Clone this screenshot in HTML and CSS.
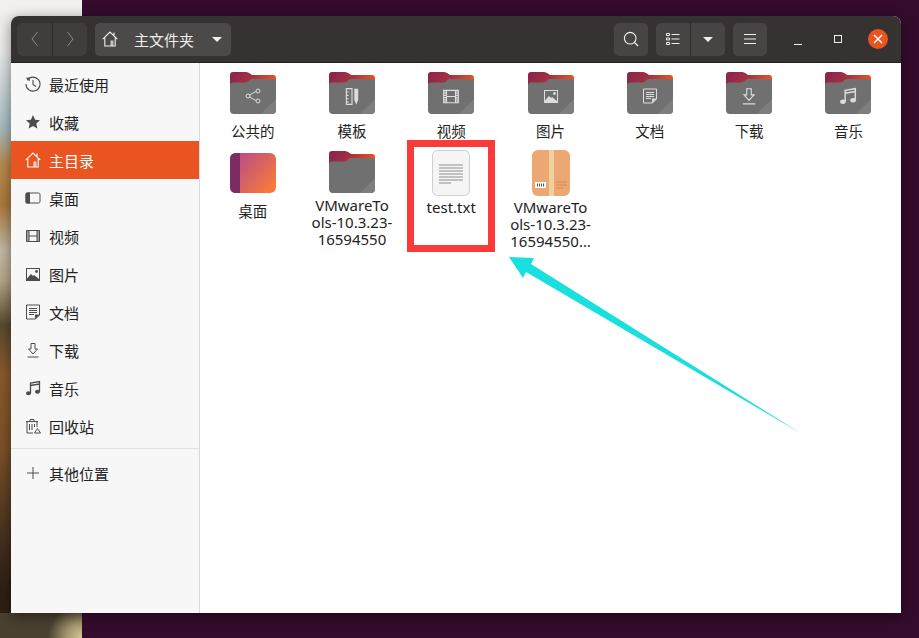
FILE: index.html
```html
<!DOCTYPE html>
<html lang="zh-CN">
<head>
	<meta charset="UTF-8">
	<title>主文件夹</title>
	<link rel="stylesheet" href="styles.css">
</head>
<body>
<svg class="defs" width="0" height="0">
	<defs>
		<linearGradient id="tab" x1="0" y1="0" x2="1" y2="0.3">
			<stop offset="0" stop-color="#86234f"/>
			<stop offset="0.5" stop-color="#a5303f"/>
			<stop offset="1" stop-color="#e95420"/>
		</linearGradient>
		<linearGradient id="desk" x1="0" y1="0" x2="1" y2="0.7">
			<stop offset="0" stop-color="#b1448f"/>
			<stop offset="1" stop-color="#f47a3c"/>
		</linearGradient>
		<symbol id="folder-base" viewBox="0 0 46 42">
			<path fill="url(#tab)" d="M3 0H16Q18 0 20 1.5L22 3H43Q46 3 46 6V20H0V3Q0 0 3 0Z"/>
			<path fill="#707070" d="M3 10.5H15Q17 10.5 18.5 9L20 7.5Q20.5 7 22 7H43Q46 7 46 10V38Q46 42 42 42H4Q0 42 0 38V13.5Q0 10.5 3 10.5Z"/>
			<path fill="#7e7e7e" d="M46 27V38Q46 42 42 42H31Z"/>
		</symbol>
		<symbol id="i-recent" viewBox="0 0 16 16">
			<path fill="none" stroke="currentColor" stroke-width="1.1" d="M2.2 4.2A7 7 0 1 1 1 8M8 4V8.4L11 10.5"/>
			<path fill="currentColor" d="M.8 1.8L4.8 1.6 4.6 5.4Z"/>
		</symbol>
		<symbol id="i-star" viewBox="0 0 16 16">
			<path fill="currentColor" d="M8 1L10.1 5.8 15 6.2 11.3 9.5 12.4 14.6 8 11.9 3.6 14.6 4.7 9.5 1 6.2 5.9 5.8Z"/>
		</symbol>
		<symbol id="i-home" viewBox="0 0 16 16">
			<path fill="none" stroke="currentColor" stroke-width="1.1" d="M.7 8.2L8 1 15.3 8.2M2.8 6.6V15H13.2V6.6M12 1.6V4.2"/>
			<path fill="currentColor" opacity=".75" d="M8.5 9.5H11.5V15H8.5Z"/>
		</symbol>
		<symbol id="i-desktop" viewBox="0 0 16 16">
			<path fill="currentColor" d="M2 2.5H5V13.5H2Q.5 13.5.5 12V4Q.5 2.5 2 2.5Z"/>
			<rect fill="none" stroke="currentColor" x="1" y="3" width="14" height="10" rx="1.5"/>
		</symbol>
		<symbol id="i-video" viewBox="0 0 16 16">
			<path fill="none" stroke="currentColor" d="M1.5 2.5H14.5V13.5H1.5ZM4 2.5V13.5M12 2.5V13.5M4 8H12"/>
			<path fill="none" stroke="currentColor" stroke-width="2.6" stroke-dasharray="1 1" d="M2.6 2.5V13.5M13.4 2.5V13.5"/>
		</symbol>
		<symbol id="i-picture" viewBox="0 0 16 16">
			<path fill="currentColor" fill-rule="evenodd" d="M1 2H15V15H1ZM2 3V14H14V3Z"/>
			<path fill="currentColor" d="M2 14V12.5L6 8 8 10 9 9 14 13V14Z"/>
			<circle fill="currentColor" cx="11.5" cy="5.5" r="1.4"/>
		</symbol>
		<symbol id="i-doc" viewBox="0 0 16 16">
			<path fill="none" stroke="currentColor" d="M1.5 1V15H10.5L14.5 11V1ZM4 4.5H12M4 6.5H12M4 8.500H12M4 10.500H9"/>
			<path fill="currentColor" d="M10 15V10.500H15Z"/>
		</symbol>
		<symbol id="i-download" viewBox="0 0 16 16">
			<path fill="none" stroke="currentColor" d="M6 1.500H10V7H12.500L8 12 3.500 7H6ZM2.500 15H13.500"/>
		</symbol>
		<symbol id="i-music" viewBox="0 0 16 16">
			<path fill="none" stroke="currentColor" stroke-width="1.3" d="M5.500 13V3L14.500 1.500V11.500M5.500 5.500L14.500 4"/>
			<ellipse fill="currentColor" cx="3.500" cy="13.200" rx="2.500" ry="2"/>
			<ellipse fill="currentColor" cx="12.500" cy="11.800" rx="2.500" ry="2"/>
		</symbol>
		<symbol id="i-share" viewBox="0 0 16 16">
			<path fill="none" stroke="currentColor" d="M4.500 7L11 3.500M4.500 9L11 12.500"/>
			<circle fill="none" stroke="currentColor" cx="3" cy="8" r="2"/>
			<circle fill="none" stroke="currentColor" cx="13" cy="3" r="2"/>
			<circle fill="none" stroke="currentColor" cx="13" cy="13" r="2"/>
		</symbol>
		<symbol id="i-template" viewBox="0 0 16 16">
			<path fill="none" stroke="currentColor" d="M3 1H8V15H3ZM3 4H5M3 7H5M3 10H5M3 13H5"/>
			<path fill="currentColor" d="M10 1H13.500V11L11.750 15 10 11Z"/>
		</symbol>
	</defs>
</svg>

<div class="desktop">
	<div class="window">
		<header class="headerbar">
			<div class="btn-group nav-btns">
				<button class="hbtn off"><svg class="ic" viewBox="0 0 16 16"><path fill="none" stroke="currentColor" d="M10.500 1L5 8 10.500 15"/></svg></button>
				<button class="hbtn off"><svg class="ic" viewBox="0 0 16 16"><path fill="none" stroke="currentColor" d="M5.500 1L11 8 5.500 15"/></svg></button>
			</div>
			<button class="hbtn path">
				<svg class="ic"><use href="#i-home"/></svg>
				<span class="path-name">主文件夹</span>
				<span class="caret"></span>
			</button>
			<div class="spacer"></div>
			<button class="hbtn"><svg class="ic" viewBox="0 0 16 16"><circle fill="none" stroke="currentColor" stroke-width="1.1" cx="7.200" cy="7.200" r="5.800"/><path stroke="currentColor" stroke-width="1.300" d="M11.400 11.400L15 15"/></svg></button>
			<div class="btn-group">
				<button class="hbtn"><svg class="ic" viewBox="0 0 16 16"><path fill="none" stroke="currentColor" d="M1.500 2.500H4.500V4.500H1.500ZM1.500 7H4.500V9H1.500ZM1.500 11.500H4.500V13.500H1.500ZM6.500 3.500H14.500M6.500 8H14.500M6.500 12.500H14.500"/></svg></button>
				<button class="hbtn"><span class="caret"></span></button>
			</div>
			<button class="hbtn"><svg class="ic" viewBox="0 0 16 16"><path stroke="currentColor" d="M2 3.500H14M2 8H14M2 12.500H14"/></svg></button>
			<div class="win-btns">
				<button class="wbtn"><span class="w-min"></span></button>
				<button class="wbtn"><span class="w-max"></span></button>
				<button class="wbtn"><span class="w-close"><svg width="20" height="20" viewBox="0 0 20 20"><path stroke="#fff" stroke-width="1.500" d="M6 6L14 14M14 6L6 14"/></svg></span></button>
			</div>
		</header>

		<div class="main">
			<aside class="sidebar">
				<ul class="places">
					<li><svg class="ic"><use href="#i-recent"/></svg>最近使用</li>
					<li><svg class="ic"><use href="#i-star"/></svg>收藏</li>
					<li class="on"><svg class="ic"><use href="#i-home"/></svg>主目录</li>
					<li><svg class="ic"><use href="#i-desktop"/></svg>桌面</li>
					<li><svg class="ic"><use href="#i-video"/></svg>视频</li>
					<li><svg class="ic"><use href="#i-picture"/></svg>图片</li>
					<li><svg class="ic"><use href="#i-doc"/></svg>文档</li>
					<li><svg class="ic"><use href="#i-download"/></svg>下载</li>
					<li><svg class="ic"><use href="#i-music"/></svg>音乐</li>
					<li>
						<svg class="ic" viewBox="0 0 16 16"><path fill="none" stroke="currentColor" d="M1 3.500H13M5 3.500V1.500H9V3.500M2 3.500V15H8M12 3.500V9M4.500 6V12M7 6V12M9.500 6V9"/><path fill="none" stroke="currentColor" d="M9.500 15L12.500 10.500 15.500 15Z"/></svg>
						回收站
					</li>
				</ul>
				<ul class="places others">
					<li><svg class="ic" viewBox="0 0 16 16"><path stroke="currentColor" d="M8 2V14M2 8H14"/></svg>其他位置</li>
				</ul>
			</aside>

			<section class="files">
				<div class="item"><div class="thumb"><svg class="thumb-svg" width="46" height="42" viewBox="0 0 46 42"><use href="#folder-base"/><use href="#i-share" x="15" y="16" width="16" height="16"/></svg></div><div class="name cjk">公共的</div></div>
				<div class="item"><div class="thumb"><svg class="thumb-svg" width="46" height="42" viewBox="0 0 46 42"><use href="#folder-base"/><use href="#i-template" x="14" y="15.500" width="18" height="18"/></svg></div><div class="name cjk">模板</div></div>
				<div class="item"><div class="thumb"><svg class="thumb-svg" width="46" height="42" viewBox="0 0 46 42"><use href="#folder-base"/><use href="#i-video" x="14" y="15.500" width="18" height="18"/></svg></div><div class="name cjk">视频</div></div>
				<div class="item"><div class="thumb"><svg class="thumb-svg" width="46" height="42" viewBox="0 0 46 42"><use href="#folder-base"/><use href="#i-picture" x="15" y="16" width="16" height="16"/></svg></div><div class="name cjk">图片</div></div>
				<div class="item"><div class="thumb"><svg class="thumb-svg" width="46" height="42" viewBox="0 0 46 42"><use href="#folder-base"/><use href="#i-doc" x="15" y="16" width="16" height="16"/></svg></div><div class="name cjk">文档</div></div>
				<div class="item"><div class="thumb"><svg class="thumb-svg" width="46" height="42" viewBox="0 0 46 42"><use href="#folder-base"/><use href="#i-download" x="14" y="15" width="18" height="18"/></svg></div><div class="name cjk">下载</div></div>
				<div class="item"><div class="thumb"><svg class="thumb-svg" width="46" height="42" viewBox="0 0 46 42"><use href="#folder-base"/><use href="#i-music" x="14" y="15" width="18" height="18"/></svg></div><div class="name cjk">音乐</div></div>

				<div class="item">
					<div class="thumb">
						<svg width="46" height="42" viewBox="0 0 46 42">
							<rect width="46" height="40" y="1" rx="6" fill="url(#desk)"/>
							<path fill="#7e2c66" d="M6 1H10V41H6Q0 41 0 35V7Q0 1 6 1Z"/>
						</svg>
					</div>
					<div class="name cjk">桌面</div>
				</div>
				<div class="item"><div class="thumb"><svg class="thumb-svg" width="46" height="42" viewBox="0 0 46 42"><use href="#folder-base"/></svg></div><div class="name">VMwareTo<br>ols-10.3.23-<br>16594550</div></div>
				<div class="item">
					<div class="thumb">
						<svg width="38" height="46" viewBox="0 0 38 46">
							<rect x=".5" y=".5" width="37" height="45" rx="5" fill="#f5f5f5" stroke="#cfcfcf"/>
							<path stroke="#8f8f8f" d="M7 15H31M7 18H31M7 21H31M7 24H31M7 27H31M7 30H31M7 33H19"/>
						</svg>
					</div>
					<div class="name">test.txt</div>
				</div>
				<div class="item">
					<div class="thumb">
						<svg width="38" height="46" viewBox="0 0 38 46">
							<rect width="38" height="46" rx="6" fill="#eba873"/>
							<rect x="17" width="5" height="46" fill="#f0d09c"/>
							<rect x="3" y="32" width="11" height="6" fill="#fff"/>
							<path stroke="#555" stroke-dasharray="1 1" stroke-width="3" d="M5 35H12"/>
							<path stroke="#e08a4a" d="M24 32H35M24 35H35M24 38H31"/>
						</svg>
					</div>
					<div class="name">VMwareTo<br>ols-10.3.23-<br>16594550…</div>
				</div>
			</section>
		</div>
	</div>
</div>

<div class="mark-box"></div>
<svg class="mark-arrow" width="919" height="638" viewBox="0 0 919 638">
	<path fill="#19dfdf" d="M509 257L534 258 531 264 802 434 526 272 523 278Z"/>
</svg>
</body>
</html>
```

FILE: styles.css
```css
*{
	margin:0;
	padding:0;
	box-sizing:border-box;
}
ul{
	list-style:none;
}
html,body{
	height:638px;
	overflow:hidden;
}
body{
	font-family:"Noto Sans","Noto Sans CJK SC",sans-serif;
	font-size:15px;
	color:#222;
}
button{
	font:inherit;
	color:inherit;
	border:none;
	background:none;
}
.defs{
	display:block;
	height:0;
}
.desktop{
	height:638px;
	padding:16px 0 0 11px;
	background:
		radial-gradient(circle 34px at 82px 25px,#d6c796 0,#a3966f 45%,rgba(74,64,48,0) 100%) 0 613px/82px 25px no-repeat,
		linear-gradient(180deg,#4a4030 0,#4a4030 100%) 0 613px/82px 25px no-repeat,
		linear-gradient(180deg,#f2f1f0 0,#ecebea 50px,#a6bcc2 128px,#b98a4c 165px,#ab7a3e 205px,#c3baa6 250px,#b7a88c 280px,#5a4a30 325px,#8a5a2c 375px,#7c5028 450px,#4a3420 530px,#2e2014 590px,#2e2014 613px) 0 0/82px 613px no-repeat,
		#350b2c;
}
.window{
	width:890px;
	height:597px;
	display:flex;
	flex-direction:column;
	border-radius:8px 8px 0 0;
	overflow:hidden;
	background:#fff;
	box-shadow:0 3px 14px rgba(0,0,0,.45);
}

/* 标题栏 */
.headerbar{
	flex:none;
	height:47px;
	display:flex;
	align-items:center;
	gap:8px;
	padding:0 3px 0 6px;
	background:#353231;
	border-bottom:1px solid #232120;
	color:#eee;
}
.spacer{
	flex:1;
}
.btn-group{
	display:flex;
	gap:1px;
	background:#2c2a29;
	border-radius:5px;
}
.btn-group .hbtn:first-child{
	border-radius:5px 0 0 5px;
}
.btn-group .hbtn:last-child{
	border-radius:0 5px 5px 0;
}
.hbtn{
	width:34px;
	height:33px;
	display:flex;
	align-items:center;
	justify-content:center;
	background:#474543;
	border-radius:5px;
}
.hbtn.off{
	background:#403e3c;
	color:#8b8987;
}
.nav-btns .hbtn:first-child{
	width:35px;
}
.path{
	width:136px;
	justify-content:flex-start;
	padding:0 7px;
	background:#4c4a48;
}
.path-name{
	margin-left:16px;
	margin-right:18px;
}
.caret{
	width:0;
	height:0;
	border-left:5px solid transparent;
	border-right:5px solid transparent;
	border-top:5px solid #eee;
}
.ic{
	flex:none;
	width:16px;
	height:16px;
}
.win-btns{
	display:flex;
	margin-left:3px;
}
.wbtn{
	width:40px;
	height:33px;
	display:flex;
	align-items:center;
	justify-content:center;
}
.w-min{
	width:8px;
	height:1px;
	margin-top:10px;
	background:#eee;
}
.w-max{
	width:8px;
	height:8px;
	border:1px solid #eee;
}
.w-close{
	width:20px;
	height:20px;
	border-radius:50%;
	background:#e95420;
}
.w-close svg{
	display:block;
}

.main{
	flex:1;
	display:flex;
	min-height:0;
}

/* 左侧栏 */
.sidebar{
	flex:none;
	width:189px;
	padding-top:2px;
	background:#f7f7f7;
	border-right:1px solid #d9d9d9;
}
.places li{
	height:38px;
	display:flex;
	align-items:center;
	gap:8px;
	padding-left:14px;
}
.places .ic{
	color:#4c4c4c;
}
.places li.on{
	background:#e95420;
	color:#fff;
}
.places li.on .ic{
	color:#fff;
}
.others{
	margin-top:3px;
	padding-top:5px;
	border-top:1px solid #e2e2e2;
}

/* 文件区 */
.files{
	flex:1;
	display:grid;
	grid-template-columns:repeat(7,99.3px);
	grid-auto-rows:80px;
	padding:8px 0 0 3px;
	background:#fff;
}
.item{
	display:flex;
	flex-direction:column;
	align-items:center;
	font-size:15px;
}
.thumb{
	height:44px;
	display:flex;
	align-items:center;
	color:#dcdcdc;
}
.thumb svg{
	flex:none;
}
.name{
	margin-top:4px;
	line-height:17px;
	text-align:center;
	color:#222;
	white-space:nowrap;
}
.name.cjk{
	font-size:14.5px;
	line-height:24px;
}

/* 截图上的标注 */
.mark-box{
	position:absolute;
	left:407px;
	top:140px;
	width:88px;
	height:112px;
	border:7px solid #fb3a3a;
}
.mark-arrow{
	position:absolute;
	left:0;
	top:0;
}
```
